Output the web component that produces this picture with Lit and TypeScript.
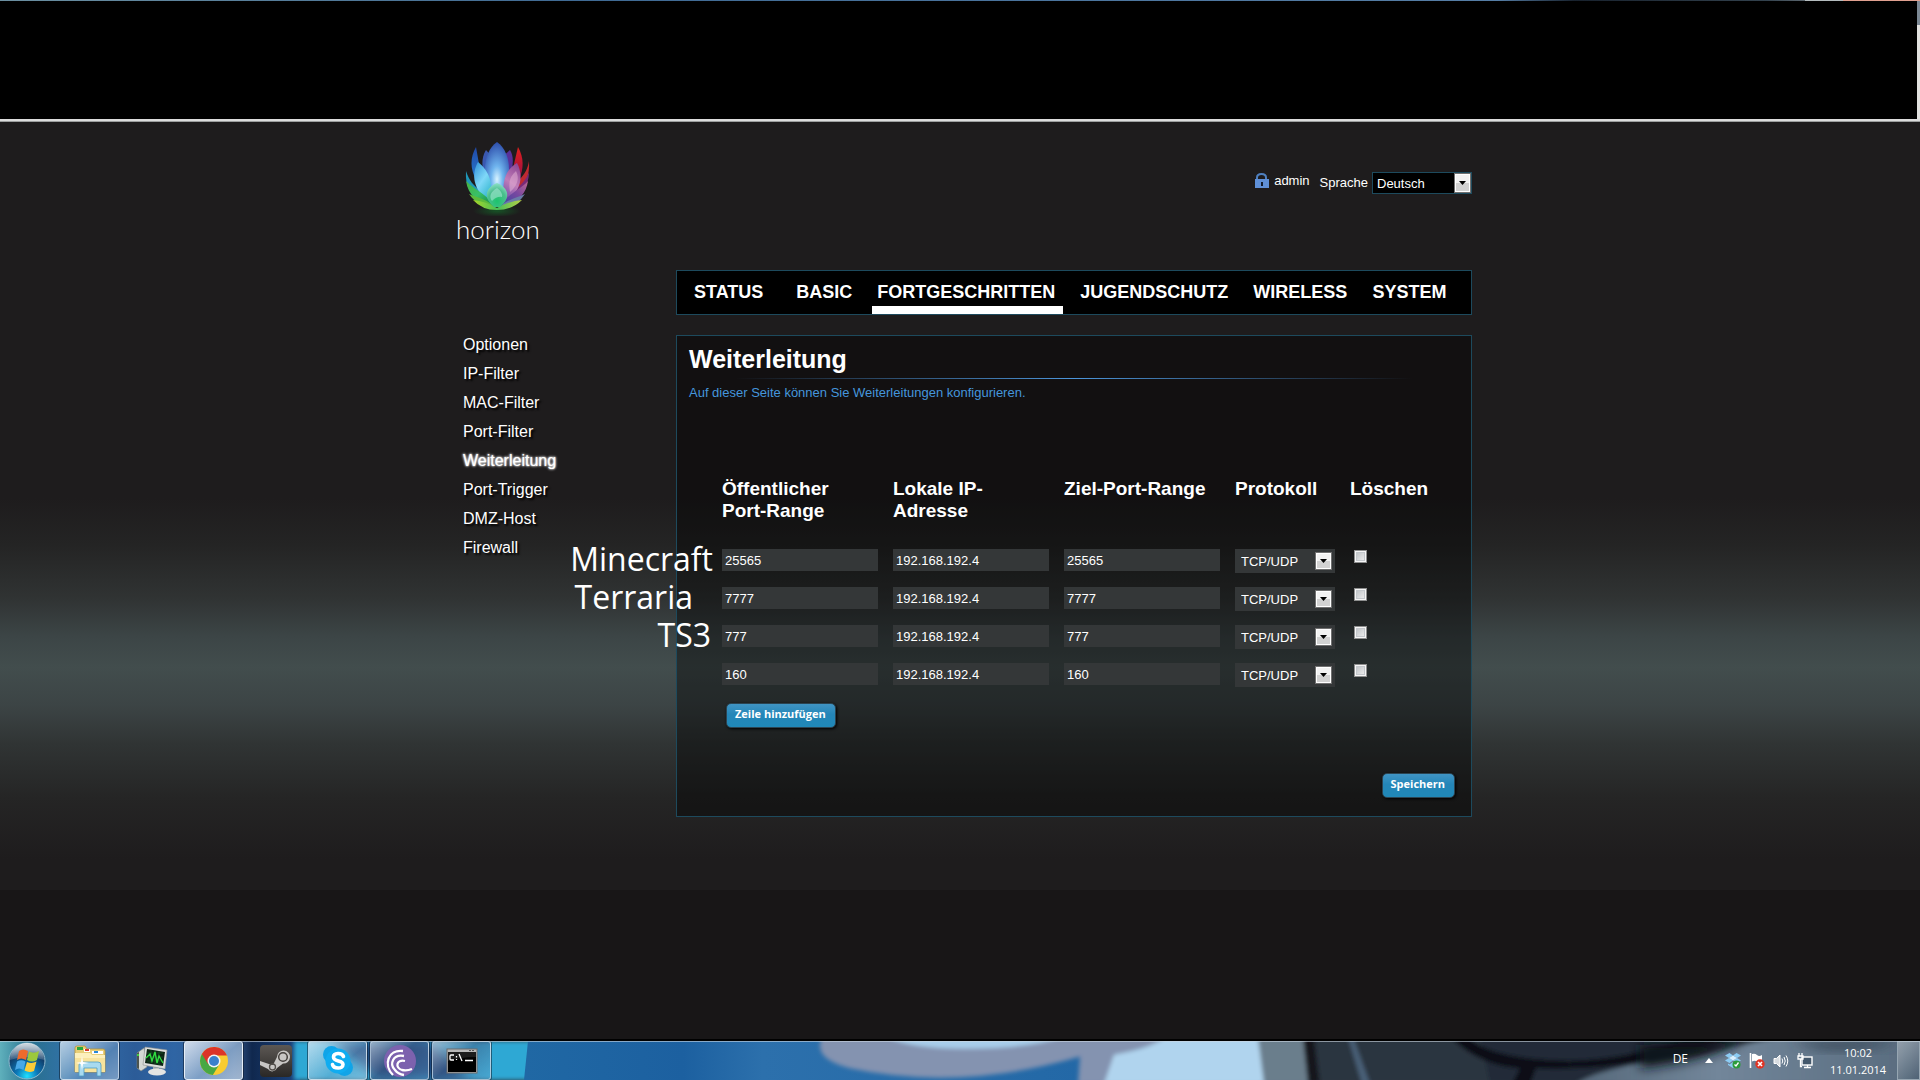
import { LitElement, html, css, svg } from "lit";
import { customElement, property, state } from "lit/decorators.js";
import { classMap } from "lit/directives/class-map.js";

interface ForwardRule {
  note: string;
  publicPort: string;
  localIp: string;
  targetPort: string;
  protocol: string;
}

const lotus = html`<svg class="lotus" viewBox="0 0 72 76" aria-hidden="true">
  <defs>
    <radialGradient id="l-center" cx=".5" cy=".68" r=".7"><stop offset="0" stop-color="#d8f3ff" /><stop offset=".35" stop-color="#6fb4ee" /><stop offset="1" stop-color="#2a49a8" /></radialGradient>
    <radialGradient id="l-green" cx=".5" cy=".75" r=".75"><stop offset="0" stop-color="#1cc46c" /><stop offset=".6" stop-color="#4bbf8e" /><stop offset="1" stop-color="#8fe0c8" /></radialGradient>
    <linearGradient id="l-cyan" x1="0" y1="0" x2=".6" y2="1"><stop offset="0" stop-color="#2f8fd8" /><stop offset=".55" stop-color="#7fd8f8" /><stop offset="1" stop-color="#35b8d0" /></linearGradient>
    <linearGradient id="l-pink" x1=".6" y1="0" x2=".3" y2="1"><stop offset="0" stop-color="#8f4a96" /><stop offset=".5" stop-color="#c07cb8" /><stop offset="1" stop-color="#6a4aa8" /></linearGradient>
    <linearGradient id="l-red" x1="0" y1="0" x2="0" y2="1"><stop offset="0" stop-color="#e2201c" /><stop offset=".6" stop-color="#a8123c" /><stop offset="1" stop-color="#5a1a70" /></linearGradient>
    <linearGradient id="l-blue" x1="0" y1="0" x2="0" y2="1"><stop offset="0" stop-color="#2048a8" /><stop offset="1" stop-color="#2a86d8" /></linearGradient>
    <linearGradient id="l-left" x1="0" y1="0" x2="1" y2="1"><stop offset="0" stop-color="#48b040" /><stop offset=".5" stop-color="#38c068" /><stop offset="1" stop-color="#128048" /></linearGradient>
    <linearGradient id="l-right" x1="1" y1="0" x2="0" y2="1"><stop offset="0" stop-color="#c06890" /><stop offset=".45" stop-color="#7a48a0" /><stop offset="1" stop-color="#3848a0" /></linearGradient>
    <linearGradient id="l-base" x1="0" y1="0" x2="1" y2="0"><stop offset="0" stop-color="#a8d428" /><stop offset=".5" stop-color="#48c058" /><stop offset="1" stop-color="#b8d048" /></linearGradient>
    <radialGradient id="l-glow"><stop offset="0" stop-color="#146428" stop-opacity=".75" /><stop offset="1" stop-color="#146428" stop-opacity="0" /></radialGradient>
  </defs>
  <ellipse cx="36" cy="71" rx="24" ry="6" fill="url(#l-glow)" />
  <path d="M15 7C9 18 9 28 15 40L22 46L18 24Z" fill="url(#l-blue)" />
  <path d="M5 31C4 46 9 54 20 60L22 52C12 46 8 40 5 31Z" fill="#1f96b8" />
  <path d="M57 7C63 18 63 28 58 40L50 48L53 24Z" fill="url(#l-red)" />
  <path d="M68 21C69 36 64 46 56 52L58 40C64 34 67 28 68 21Z" fill="#c02a30" />
  <path d="M25 10C20 18 20 28 26 42L36 46L34 20Z" fill="#3a58b0" />
  <path d="M49 10C54 18 52 30 46 44L36 46L38 20Z" fill="#58309a" />
  <path d="M68 32C68 46 60 56 48 60L50 52C60 46 65 40 68 32Z" fill="#7a2a78" />
  <path d="M36 2C24 10 21 30 27 46Q30 53 36 57Q42 53 45 46C51 30 48 10 36 2Z" fill="url(#l-center)" />
  <path d="M17 22C10 34 12 50 28 62C33 48 30 32 17 22Z" fill="url(#l-cyan)" />
  <path d="M56 23C43 30 40 46 44 62C60 52 63 36 56 23Z" fill="url(#l-pink)" />
  <path d="M55 31C47 38 48 45 49 52C56 46 59 39 55 31Z" fill="#e6b4d6" opacity=".5" />
  <path d="M5 41C7 55 17 64 32 66C28 55 16 52 5 41Z" fill="url(#l-left)" />
  <path d="M67 41C65 55 55 64 41 66C44 55 58 51 67 41Z" fill="url(#l-right)" />
  <path d="M8 54C14 63 24 68 34 68C28 60 18 58 8 54Z" fill="#5cba3c" />
  <path d="M64 54C58 63 50 68 38 68C44 60 56 58 64 54Z" fill="#6a7ca8" />
  <path d="M12 60Q24 61 36 68Q48 61 61 60Q51 70 36 70Q21 70 12 60Z" fill="url(#l-base)" />
  <path d="M36 43C24 48 22 58 33 67H39C50 58 48 48 36 43Z" fill="url(#l-green)" />
  <path d="M36 48C29 52 28 57 31 61Q36 56 41 57Q42 52 36 48Z" fill="#a4e6d2" opacity=".6" />
</svg>`;

const lockIcon = html`<svg class="lock" viewBox="0 0 15 16" aria-hidden="true">
  <path d="M3 8V5.500C3 .8 12 .8 12 5.500V8" fill="none" stroke="#4f80c0" stroke-width="2" />
  <rect x="1" y="7" width="14" height="9" fill="#5f90d8" /><rect x="7" y="10" width="2" height="4" fill="#111c30" />
</svg>`;

const arrow = html`<span class="arrow" aria-hidden="true"><svg viewBox="0 0 7 4"><path d="M0 0H7L3.5 4Z" fill="#000" /></svg></span>`;

const wallpaper = html`<svg class="wallpaper" viewBox="0 0 1920 40" preserveAspectRatio="none" aria-hidden="true">
  <defs>
    <linearGradient id="w-left"><stop offset="0" stop-color="#5fb0bc" /><stop offset=".1" stop-color="#28708e" /><stop offset=".25" stop-color="#3472ae" /><stop offset=".45" stop-color="#2c5c98" /><stop offset=".58" stop-color="#2f65a4" /><stop offset=".78" stop-color="#34588c" /><stop offset=".84" stop-color="#10284e" /><stop offset="1" stop-color="#1c4480" /></linearGradient>
    <linearGradient id="w-blue"><stop offset="0" stop-color="#2068a4" /><stop offset=".2" stop-color="#1c60a0" /><stop offset=".3" stop-color="#2c70ac" /><stop offset="1" stop-color="#1c62a2" /></linearGradient>
    <linearGradient id="w-grey"><stop offset="0" stop-color="#55687a" /><stop offset=".4" stop-color="#72869a" /><stop offset="1" stop-color="#56697c" /></linearGradient>
    <filter id="w-soft" x="-5%" y="-30%" width="110%" height="160%"><feGaussianBlur stdDeviation="2" /></filter>
    <filter id="w-haze" x="-10%" y="-50%" width="120%" height="200%"><feGaussianBlur stdDeviation="6" /></filter>
  </defs>
  <rect width="300" height="40" fill="url(#w-left)" />
  <rect x="294" width="239" height="40" fill="#2fa8d4" filter="url(#w-soft)" />
  <path d="M330 0L380 40H470L430 0Z" fill="#1a4a80" filter="url(#w-haze)" />
  <path d="M528 0H1320V40H524Z" fill="url(#w-blue)" />
  <g filter="url(#w-soft)">
    <path d="M822 -4Q812 18 850 28Q960 52 1080 16L1078 44H1110L1120 14L1180 -4Z" fill="#8493b0" />
    <path d="M888 -4Q910 8 964 8Q1030 8 1062 -4Z" fill="#a8cdea" />
    <path d="M1166 -4Q1150 8 1114 14L1104 44H1266L1258 -4Z" fill="#b0d4ee" />
    <path d="M1258 -4H1304L1308 44H1264Z" fill="#6a7e8c" />
    <path d="M1303 -4H1930V44H1308Z" fill="#2c3640" />
    <path d="M1303 -4H1314L1320 44H1308Z" fill="#12181c" />
    <path d="M1348 -4H1353L1370 44H1362Z" fill="#4a6078" />
    <path d="M1480 -4H1680V44H1490Z" fill="#222c38" />
    <path d="M1576 44Q1600 26 1700 14L1780 -4H1930V44Z" fill="url(#w-grey)" />
    <path d="M1450 -4Q1480 26 1520 28L1512 44H1530L1536 28Q1640 32 1740 -4H1690Q1620 22 1560 20Q1490 18 1468 -4Z" fill="#0a0e16" />
  </g>
  <path d="M1640 4L1745 0Q1700 22 1640 28Z" fill="#10161e" filter="url(#w-haze)" />
  <path d="M1790 0H1900Q1860 12 1820 8Z" fill="#364454" filter="url(#w-haze)" />
</svg>`;

const icons: Record<string, unknown> = {
  start: html`<svg class="orb" viewBox="0 0 38 38" aria-hidden="true">
    <defs><radialGradient id="orb" cx=".5" cy=".92" r=".85"><stop offset="0" stop-color="#20e0ff" /><stop offset=".35" stop-color="#0c78b8" /><stop offset=".75" stop-color="#103c68" /><stop offset="1" stop-color="#4a6c88" /></radialGradient>
    <linearGradient id="orbs" x1="0" y1="0" x2="0" y2="1"><stop offset="0" stop-color="#fff" stop-opacity=".75" /><stop offset="1" stop-color="#fff" stop-opacity=".15" /></linearGradient></defs>
    <circle cx="19" cy="19" r="18" fill="url(#orb)" stroke="#8fb8cc" stroke-width="1" />
    <path d="M2 18A17 17 0 0 1 36 18Q19 12 2 18Z" fill="url(#orbs)" />
    <path d="M11 9Q15 6 20 9L18 18Q13 15 9 18Z" fill="#ee6a2c" /><path d="M21 9.500Q26 12 31 9L29 18Q24 21 19 18Z" fill="#9cc83c" />
    <path d="M9 19.500Q13 17 17.500 19.500L15.500 28Q11 25 7 28Z" fill="#48a8e8" /><path d="M19 20Q24 22 28.500 19.500L26 29Q21 31 16.500 28.500Z" fill="#fccc38" />
  </svg>`,
  explorer: html`<svg viewBox="0 0 34 32" aria-hidden="true">
    <path d="M2 3Q2 1 4 1H12L14 4H30Q32 4 32 6V27H2Z" fill="#e8cf78" stroke="#b89438" stroke-width=".8" />
    <path d="M4 2H10V5H4Z" fill="#28a838" /><path d="M11 4H17V7H11Z" fill="#fff" /><path d="M12 4H16V6H12Z" fill="#d83828" /><path d="M19 6H30V9H19Z" fill="#fff" /><path d="M21 6H25V8H21Z" fill="#2888d8" />
    <path d="M2 8H17L19 10H32V27H2Z" fill="#f7e39c" /><path d="M2 8H17L19 10H32V13H2Z" fill="#fcf0bc" />
    <path d="M6 31V20Q6 17 9 17H25Q28 17 28 20V31H24V23H11V31Z" fill="#a8daf0" stroke="#4c9cc4" stroke-width=".8" />
    <path d="M9 11L10 17L16 18L10 19L9 25L8 19L3 18L8 17Z" fill="#fff" />
  </svg>`,
  monitor: html`<svg viewBox="0 0 34 32" aria-hidden="true">
    <path d="M2 8L9 3L12 22L6 26L2 23Z" fill="#d4d8d4" stroke="#808480" stroke-width=".6" /><path d="M2 8L4 7V24L2 23Z" fill="#4c5450" /><path d="M2 9H4V11H2Z" fill="#40d040" />
    <path d="M10 2L32 5L30 24L8 20Z" fill="#dcdedc" stroke="#909490" stroke-width=".6" /><path d="M12 4L30 7L28 21L10 18Z" fill="#0c2414" />
    <path d="M12 8H28M12 12H28M12 16H27M16 5V18M20 6V19M24 6V20" stroke="#1c5c28" stroke-width=".6" />
    <path d="M11 13L15 9L17 16L20 7L22 18L24 11L28 18" fill="none" stroke="#30dc40" stroke-width="1.400" />
    <path d="M18 22L24 23V26H18Z" fill="#a8aca8" /><ellipse cx="22" cy="27" rx="9" ry="3.500" fill="#e4e4e2" />
  </svg>`,
  chrome: html`<svg viewBox="0 0 34 32" aria-hidden="true">
    <circle cx="17" cy="16" r="14" fill="#f8cc30" />
    <path d="M17 16L4.900 9A14 14 0 0 0 15.800 30L22 20Z" fill="#48a844" />
    <path d="M4.900 9A14 14 0 0 1 30 10.500H17L11 19Z" fill="#dc3428" />
    <circle cx="17" cy="16" r="6.500" fill="#f4f4f4" /><circle cx="17" cy="16" r="5" fill="#3a80cc" />
  </svg>`,
  steam: html`<svg viewBox="0 0 34 32" aria-hidden="true">
    <defs><linearGradient id="st" x1="0" y1="0" x2="0" y2="1"><stop offset="0" stop-color="#5c5854" /><stop offset="1" stop-color="#2a2826" /></linearGradient></defs>
    <rect x="1" width="32" height="32" rx="4" fill="url(#st)" />
    <path d="M1 16L10 19L14 20L18 12A6.500 6.500 0 1 1 24 18.500L18 23A5 5 0 0 1 9 24L1 20Z" fill="#c8c6c4" />
    <circle cx="24" cy="12" r="4.300" fill="#c8c6c4" stroke="#45413e" stroke-width="1.500" /><circle cx="13.500" cy="22" r="3" fill="none" stroke="#54504c" stroke-width="1.300" />
  </svg>`,
  skype: html`<svg viewBox="0 0 34 32" aria-hidden="true">
    <circle cx="10.500" cy="9.500" r="8.500" fill="#10a4e8" /><circle cx="23.500" cy="22.500" r="8.500" fill="#10a4e8" /><circle cx="17" cy="16" r="12.500" fill="#10acf0" />
    <path d="M22.500 11.500C21 7.500 12.500 7.500 12.500 12C12.500 17.500 22 14.500 22 19.500C22 24.500 12.500 24 11.500 19.500" fill="none" stroke="#fff" stroke-width="3.600" stroke-linecap="round" />
  </svg>`,
  torrent: html`<svg viewBox="0 0 34 32" aria-hidden="true">
    <circle cx="17" cy="16" r="16" fill="#7c62ae" />
    <g fill="none" stroke="#fff" stroke-width="2.300"><path d="M20 6C5 4 0 20 10 30" /><path d="M21 11C10 9 6 19 12 25Q15 29 21 30" /><path d="M22 16C13 14 12 23 19 25Q24 26 29 24" /></g>
  </svg>`,
  cmd: html`<svg viewBox="0 0 34 32" aria-hidden="true">
    <rect x="2" y="4" width="30" height="24" fill="#b8b8b8" stroke="#6c6c6c" /><rect x="3" y="7" width="28" height="20" fill="#000" />
    <path d="M24 5.500H26M27 5.500H29" stroke="#555" /><path d="M3 16V7H31V12Q16 12 3 16Z" fill="#1c1c1c" />
    <path d="M9 10H6Q5 10 5 11V14Q5 15 6 15H9M11.500 11V12.500M11.500 14V15M14 9L17 16M20 15.500H28" fill="none" stroke="#fff" stroke-width="1.300" />
  </svg>`,
};

const tray = [
  { label: "Dropbox", art: svg`<path d="M4.500 0L8 2.500L4 5L0 2.500ZM11.500 0L16 2.500L12 5L8 2.500ZM0 7.500L4 5L8 7.500L4.500 10ZM16 7.500L12 5L8 7.500L11.500 10ZM3 10.500L4.500 11.500L8 9L11.500 11.500L13 10.500V12L8 15L3 12Z" fill="#8cccf4" /><path d="M4 5L8 2.500L12 5L8 7.500Z" fill="#d8f0ff" /><circle cx="11.500" cy="11.500" r="4" fill="#2c9c3c" /><path d="M9.500 11.500L11 13L13.500 9.500" fill="none" stroke="#fff" stroke-width="1.300" />` },
  { label: "Wartungscenter", art: svg`<path d="M1.500 0V15" stroke="#fff" stroke-width="1.600" /><path d="M3 1Q6 0 8 2T13 2V9Q10 10 8 8.500T3 8.500Z" fill="#fff" /><circle cx="11" cy="11" r="4.700" fill="#e03424" /><path d="M9 9L13 13M13 9L9 13" stroke="#fff" stroke-width="1.600" />` },
  { label: "Lautstärke", art: svg`<path d="M1 5.500H3.500L7 2V14L3.500 10.500H1Z" fill="#d8dce0" stroke="#fff" /><path d="M9 5.500Q10.500 8 9 10.500M11 4Q13.500 8 11 12M13 2.500Q16.500 8 13 13.500" fill="none" stroke="#fff" />` },
  { label: "Netzwerk", art: svg`<rect x="5" y="4" width="10" height="8" fill="#44586c" stroke="#fff" stroke-width="1.400" /><path d="M7 14.500H14M10.500 12V14.500M2 0V3M5 0V3M1 3H6V6H1ZM3.500 6V13.500H5" fill="none" stroke="#fff" stroke-width="1.300" />` },
];

@customElement("upc-select")
class UpcSelect extends LitElement {
  @property() label = "";
  @property() value = "";
  @property({ attribute: false }) options: string[] = [];

  static styles = css`
    :host { display: grid; }
    select, .arrow { grid-area: 1 / 1; }
    select {
      appearance: none; width: 100%; margin: 0; border: 0; border-radius: 0;
      font: 13px "Liberation Sans", Arial, sans-serif; color: #fff;
      height: 24px; padding: 0 6px; background: #343738;
    }
    .arrow {
      justify-self: end; align-self: start; pointer-events: none; box-sizing: border-box;
      width: 17px; height: 18px; margin: 3px 3px 0 0; border: 1px solid #707070;
      box-shadow: inset 0 0 0 1px #fff; display: grid; place-items: center;
      background: linear-gradient(#f2f2f2 50%, #d2d2d2 50%);
    }
    svg { width: 7px; height: 4px; }
    :host([framed]) select { height: 22px; padding: 0 4px; background: #000; border: 1px solid #1d4a5d; }
    :host([framed]) .arrow { height: 20px; margin: 1px 1px 0 0; }
  `;

  render() {
    return html`<select aria-label=${this.label}>
      ${this.options.map((o) => html`<option ?selected=${o === this.value}>${o}</option>`)}
    </select>${arrow}`;
  }
}

@customElement("app-root")
class AppRoot extends LitElement {
  private tabs = ["STATUS", "BASIC", "FORTGESCHRITTEN", "JUGENDSCHUTZ", "WIRELESS", "SYSTEM"];
  private links = ["Optionen", "IP-Filter", "MAC-Filter", "Port-Filter", "Weiterleitung", "Port-Trigger", "DMZ-Host", "Firewall"];
  private apps = [
    { name: "Windows-Explorer", icon: "explorer", look: "open" },
    { name: "Systemmonitor", icon: "monitor", look: "" },
    { name: "Google Chrome", icon: "chrome", look: "active" },
    { name: "Steam", icon: "steam", look: "" },
    { name: "Skype", icon: "skype", look: "open" },
    { name: "BitTorrent", icon: "torrent", look: "dim" },
    { name: "Eingabeaufforderung", icon: "cmd", look: "dim" },
  ];
  @state() private rules: ForwardRule[] = [
    { note: "Minecraft", publicPort: "25565", localIp: "192.168.192.4", targetPort: "25565", protocol: "TCP/UDP" },
    { note: "Terraria", publicPort: "7777", localIp: "192.168.192.4", targetPort: "7777", protocol: "TCP/UDP" },
    { note: "TS3", publicPort: "777", localIp: "192.168.192.4", targetPort: "777", protocol: "TCP/UDP" },
    { note: "", publicPort: "160", localIp: "192.168.192.4", targetPort: "160", protocol: "TCP/UDP" },
  ];

  static styles = css`
    :host { display: flex; flex-direction: column; min-height: 100vh; background: #181617; color: #fff; font: 13px/15px "Liberation Sans", Arial, sans-serif; }
    * { box-sizing: border-box; }
    a { color: inherit; text-decoration: none; }
    ul { list-style: none; margin: 0; padding: 0; }

    .browser { height: 122px; flex: none; display: flex; flex-direction: column; border-bottom: 1px solid #9c9e9e; background: #dcdcdc; }
    .titlebar { height: 1px; background: linear-gradient(90deg, #6b8fa0, #3f6a94 30%, #567ea6 78%, #18222e 82%, #33424e 92%, #5b666e 94%, #b4bcbe 94%, #b4bcbe 96%, #e0a090 96%); }
    .window { flex: 1; display: flex; margin-bottom: 2px; }
    .blank { flex: 1; background: #000; }
    .scroll { width: 3px; background: linear-gradient(#7c8894 24px, #e2e2e0 24px); }

    .page { background: linear-gradient(#1e1c1d 0 49%, #242424 55%, #303333 62%, #3c4546 67%, #424d4d 71%, #3c4445 76%, #303434 81%, #252525 88%, #1e1c1d 96%); padding: 20px 0 73px; }
    .shell { max-width: 1024px; margin: 0 auto; }
    .top { display: flex; justify-content: space-between; align-items: flex-start; height: 128px; }
    .logo { display: flex; flex-direction: column; align-items: center; padding-left: 8px; }
    .lotus { width: 72px; height: 76px; display: block; margin: -2px 2px 0 0; }
    .brand { font: 300 26px/32px Lato, "Open Sans", sans-serif; margin-top: -3px; }
    .account { display: flex; align-items: flex-start; padding-top: 30px; }
    .lock { width: 15px; height: 16px; margin: 0 5px 0 0; }
    .account a { margin-right: 10px; line-height: 17px; }
    .language { display: flex; align-items: flex-start; gap: 4px; line-height: 21px; }
    .language upc-select { width: 100px; }

    .tabs { display: flex; gap: 12px; height: 45px; margin: 0 0 15px 228px; padding: 0 12px; background: #000; border: 1px solid #1d4a5d; font: bold 18px/42px "Liberation Sans", Arial, sans-serif; }
    .tabs a { display: block; height: 43px; padding: 0 8px 0 5px; }
    .tabs a.current { background: linear-gradient(#fff, #fff) bottom / 100% 8px no-repeat; }
    .tabs li:first-child { margin-right: 8px; }

    .body { display: grid; grid-template-columns: 228px minmax(0, 1fr); align-items: start; }
    .side { padding-left: 15px; font-size: 16px; line-height: 29px; }
    .side a { text-shadow: 2px 2px 2px #000; }
    .side a.current { text-shadow: 0 0 2px #fff, 0 0 3px #fff; }

    .panel { margin-top: 5px; padding: 9px 12px 18px; background: rgba(0, 0, 0, 0.4); border: 1px solid #1d4a5d; }
    h1 { margin: 0; font-size: 25px; line-height: 28px; }
    .rule { height: 1px; margin: 5px 0 6px; border: 0; background: linear-gradient(90deg, transparent 6%, #4c96dc 50%, transparent 94%); }
    .intro { margin: 0; color: #4596dc; }

    table { margin: 78px 0 0 33px; width: 700px; max-width: 100%; table-layout: fixed; border-collapse: collapse; }
    .wide { width: 171px; }
    .mid { width: 115px; }
    th { padding: 0 0 27px; font-size: 19px; line-height: 22px; text-align: left; vertical-align: top; }
    td { position: relative; height: 38px; padding: 0; vertical-align: top; }
    .field { display: block; width: 156px; height: 22px; padding: 0 3px; border: 0; background: #343738; color: #fff; font: inherit; }
    td upc-select { width: 100px; }
    .tick { display: block; appearance: none; width: 13px; height: 13px; margin: 1px 0 0 4px; border: 1px solid #8e8f8f; background: linear-gradient(135deg, #b8bcc0, #f4f4f4); box-shadow: inset 0 0 0 1px #f6f6f6, inset 0 0 0 2px #c4c8cc; }
    .note { position: absolute; right: 100%; top: -9px; margin-right: 9px; font: 32px/38px "Open Sans", "Noto Sans", sans-serif; white-space: nowrap; }
    .note.inset { margin-right: 29px; }
    .note.near { margin-right: 11px; }

    .button { display: block; height: 25px; padding: 0 9px 3px 8px; border: 1px solid #2b4452; border-radius: 5px; background: linear-gradient(#4094c4, #2486b8 45%, #2088b8); color: #fff; font: bold 11px/20px "Open Sans", "Noto Sans", sans-serif; box-shadow: 1px 1px 3px #000; }
    .add { margin: 2px 0 45px 37px; }
    .save { margin: 0 4px 0 auto; }

    .taskbar { position: relative; flex: none; height: 41px; margin-top: auto; display: flex; align-items: stretch; border-top: 2px solid #000; background: #2c3640; overflow: hidden; }
    .wallpaper { position: absolute; inset: 0; width: 100%; height: 100%; }
    .apps, .tray { position: relative; display: flex; align-items: stretch; }
    .taskbar::after { content: ""; position: absolute; inset: 0 0 auto; height: 1px; background: rgba(205, 215, 225, 0.6); }
    .app { display: grid; place-items: center; width: 59px; padding: 0; border: 1px solid transparent; border-radius: 3px; background: none; }
    .app svg { width: 34px; height: 32px; }
    .apps { gap: 3px; }
    .app.start { width: 57px; padding-right: 3px; }
    .app.start .orb { width: 38px; height: 38px; }
    .open, .dim, .active { border-color: rgba(220, 232, 242, 0.65); box-shadow: 0 0 0 1px rgba(10, 20, 34, 0.5); }
    .open { background: linear-gradient(140deg, rgba(225, 236, 246, 0.75), rgba(150, 185, 215, 0.35) 60%, rgba(190, 210, 230, 0.5)); }
    .dim { background: linear-gradient(140deg, rgba(210, 215, 225, 0.65), rgba(70, 90, 130, 0.5) 45%, rgba(120, 170, 210, 0.35)); }
    .active { border-color: #e6eef6; background: linear-gradient(140deg, rgba(235, 240, 248, 0.85), rgba(150, 180, 212, 0.75) 55%, rgba(190, 208, 228, 0.8)); }
    .tray { margin-left: auto; align-items: center; font: 11px/17px "Open Sans", "Noto Sans", sans-serif; }
    .lang { margin: 0 17px 5px 0; font-size: 12px; }
    .more { width: 8px; height: 5px; margin-right: 12px; }
    .status { width: 16px; height: 16px; margin-right: 8px; }
    .clock { width: 72px; text-align: center; margin: 0 3px 0 1px; }
    .clock time { display: block; }
    .desktop { align-self: stretch; width: 23px; padding: 0; border: 1px solid #97a6b2; background: linear-gradient(135deg, rgba(255, 255, 255, 0.35), rgba(70, 90, 108, 0.5)); }
  `;

  private addRow() {
    this.rules = [...this.rules, { note: "", publicPort: "", localIp: "", targetPort: "", protocol: "TCP/UDP" }];
  }

  private row(r: ForwardRule) {
    return html`<tr>
      <td>
        ${r.note ? html`<span class=${classMap({ note: true, inset: r.note === "Terraria", near: r.note === "TS3" })}>${r.note}</span>` : ""}
        <input class="field" aria-label="Öffentlicher Port-Range" .value=${r.publicPort} />
      </td>
      <td><input class="field" aria-label="Lokale IP-Adresse" .value=${r.localIp} /></td>
      <td><input class="field" aria-label="Ziel-Port-Range" .value=${r.targetPort} /></td>
      <td><upc-select label="Protokoll" .value=${r.protocol} .options=${["TCP/UDP", "TCP", "UDP"]}></upc-select></td>
      <td><input class="tick" type="checkbox" aria-label="Löschen" /></td>
    </tr>`;
  }

  render() {
    return html`
      <div class="browser">
        <div class="titlebar"></div>
        <div class="window"><div class="blank"></div><div class="scroll"></div></div>
      </div>
      <div class="page">
        <div class="shell">
          <header class="top">
            <div class="logo">${lotus}<span class="brand">horizon</span></div>
            <div class="account">
              ${lockIcon}<a href="#admin">admin</a>
              <div class="language"><span>Sprache</span><upc-select framed label="Sprache" value="Deutsch" .options=${["Deutsch", "English"]}></upc-select></div>
            </div>
          </header>
          <nav aria-label="Hauptmenü">
            <ul class="tabs">
              ${this.tabs.map((t) => html`<li><a href="#${t.toLowerCase()}" class=${classMap({ current: t === "FORTGESCHRITTEN" })}>${t}</a></li>`)}
            </ul>
          </nav>
          <div class="body">
            <nav aria-label="Untermenü">
              <ul class="side">
                ${this.links.map((l) => html`<li><a href="#${l.toLowerCase()}" class=${classMap({ current: l === "Weiterleitung" })}>${l}</a></li>`)}
              </ul>
            </nav>
            <main class="panel">
              <h1>Weiterleitung</h1>
              <hr class="rule" />
              <p class="intro">Auf dieser Seite können Sie Weiterleitungen konfigurieren.</p>
              <table>
                <colgroup><col class="wide" /><col class="wide" /><col class="wide" /><col class="mid" /><col /></colgroup>
                <thead><tr><th>Öffentlicher<br />Port-Range</th><th>Lokale IP-<br />Adresse</th><th>Ziel-Port-Range</th><th>Protokoll</th><th>Löschen</th></tr></thead>
                <tbody>${this.rules.map((r) => this.row(r))}</tbody>
              </table>
              <button class="button add" @click=${this.addRow}>Zeile hinzufügen</button>
              <button class="button save">Speichern</button>
            </main>
          </div>
        </div>
      </div>
      <footer class="taskbar">
        ${wallpaper}
        <div class="apps">
          <button class="app start" aria-label="Start">${icons.start}</button>
          ${this.apps.map((a) => html`<button class="app ${a.look}" aria-label=${a.name}>${icons[a.icon]}</button>`)}
        </div>
        <div class="tray">
          <span class="lang">DE</span>
          <svg class="more" viewBox="0 0 8 5" aria-hidden="true"><path d="M4 0L8 5H0Z" fill="#fff" /></svg>
          ${tray.map((t) => html`<svg class="status" viewBox="0 0 16 16" role="img" aria-label=${t.label}>${t.art}</svg>`)}
          <div class="clock"><time>10:02</time><time>11.01.2014</time></div>
          <button class="desktop" aria-label="Desktop anzeigen"></button>
        </div>
      </footer>
    `;
  }
}
